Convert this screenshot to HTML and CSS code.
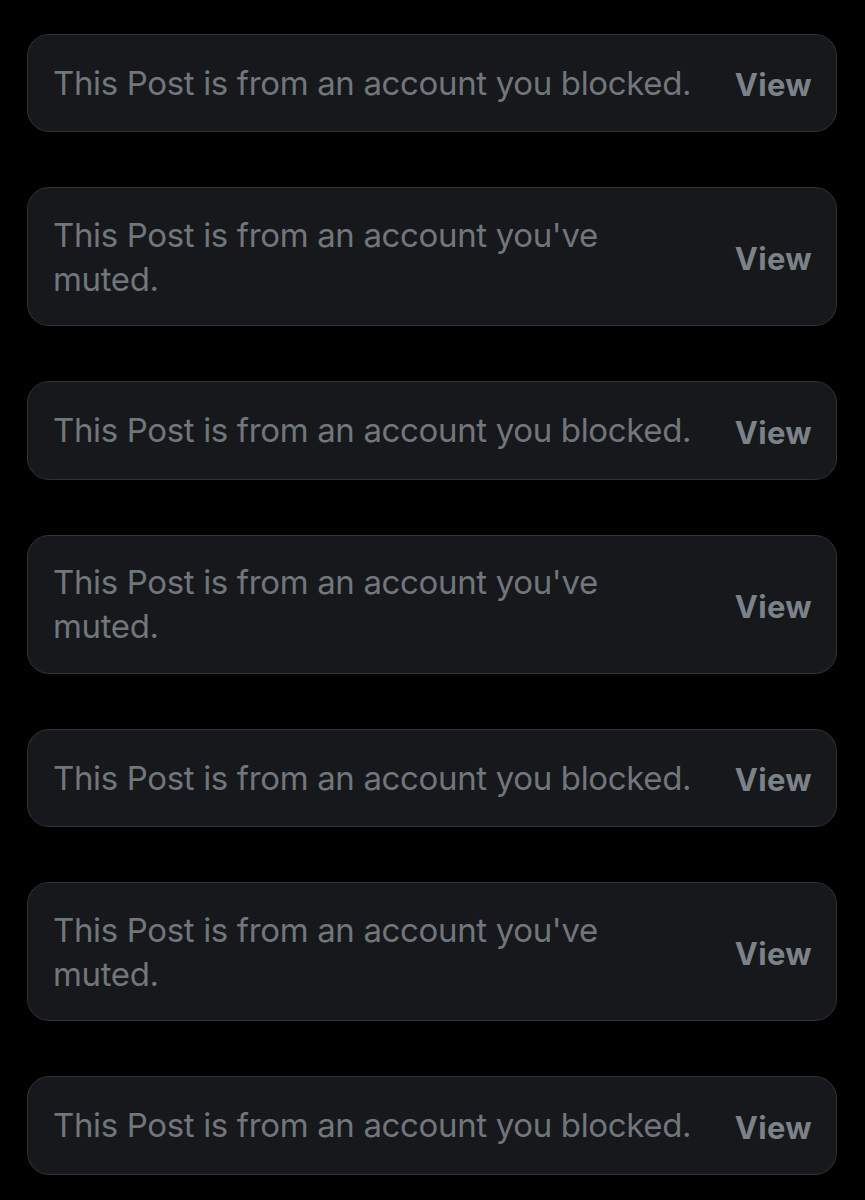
FILE: index.html
```html
<!DOCTYPE html>
<html lang="en">
<head>
<meta charset="utf-8">
<title>Hidden posts</title>
<link rel="stylesheet" href="styles.css">
</head>
<body>
<main class="feed">
  <div class="notice"><p class="msg">This Post is from an account you blocked.</p><span class="view">View</span></div>
  <div class="notice"><p class="msg">This Post is from an account you've muted.</p><span class="view">View</span></div>
  <div class="notice"><p class="msg">This Post is from an account you blocked.</p><span class="view">View</span></div>
  <div class="notice"><p class="msg">This Post is from an account you've muted.</p><span class="view">View</span></div>
  <div class="notice"><p class="msg">This Post is from an account you blocked.</p><span class="view">View</span></div>
  <div class="notice"><p class="msg">This Post is from an account you've muted.</p><span class="view">View</span></div>
  <div class="notice"><p class="msg">This Post is from an account you blocked.</p><span class="view">View</span></div>
</main>
</body>
</html>
```
FILE: styles.css
```css
html, body {
  margin: 0;
  padding: 0;
  background: #000;
}
body {
  font-family: Inter, "Noto Sans", "Liberation Sans", sans-serif;
  color: #71767b;
}
.feed {
  display: flex;
  flex-direction: column;
  gap: 55px;
  padding: 33.5px 28px 0 27px;
}
.notice {
  display: flex;
  align-items: center;
  justify-content: space-between;
  gap: 20px;
  min-height: 98.5px;
  box-sizing: border-box;
  padding: 24.5px 24px 24.5px 25px;
  background: #16181c;
  border: 1px solid #2f3336;
  border-radius: 22px;
}
.msg {
  margin: 0;
  font-size: 33px;
  line-height: 44px;
  max-width: 645px;
  letter-spacing: -0.35px;
}
.view {
  font-size: 31px;
  font-weight: 700;
  color: #7c8288;
  letter-spacing: 0.3px;
  flex-shrink: 0;
  padding-top: 4px;
}
```
